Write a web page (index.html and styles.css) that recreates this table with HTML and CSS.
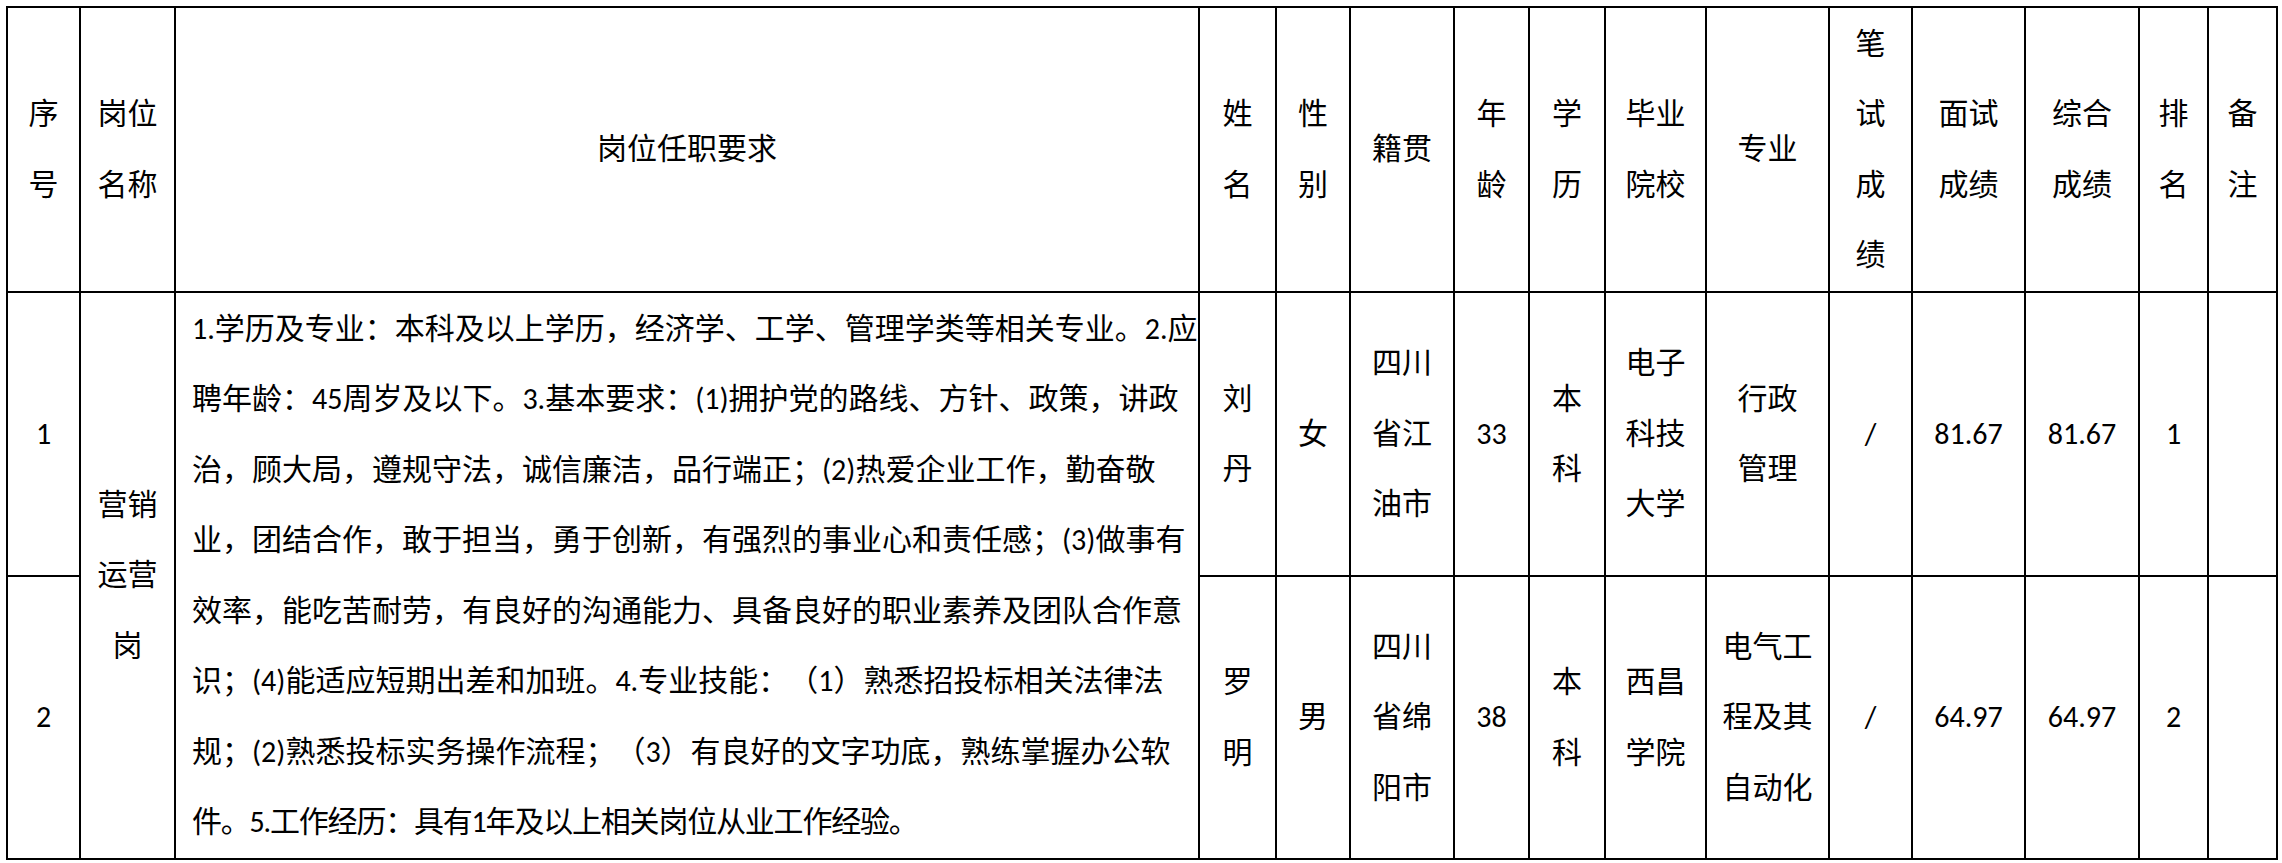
FILE: index.html
```html
<!DOCTYPE html>
<html lang="zh-CN">
<head>
<meta charset="utf-8">
<title>岗位成绩表</title>
<link rel="stylesheet" href="styles.css">
</head>
<body>
<table class="grid">
  <colgroup>
    <col class="c-no"><col class="c-post"><col class="c-req"><col class="c-name"><col class="c-sex">
    <col class="c-home"><col class="c-age"><col class="c-edu"><col class="c-school"><col class="c-major">
    <col class="c-written"><col class="c-interview"><col class="c-total"><col class="c-rank"><col class="c-note">
  </colgroup>
  <thead>
    <tr class="head">
      <th>序<br>号</th>
      <th>岗位<br>名称</th>
      <th>岗位任职要求</th>
      <th>姓<br>名</th>
      <th>性<br>别</th>
      <th>籍贯</th>
      <th>年<br>龄</th>
      <th>学<br>历</th>
      <th>毕业<br>院校</th>
      <th>专业</th>
      <th>笔<br>试<br>成<br>绩</th>
      <th>面试<br>成绩</th>
      <th>综合<br>成绩</th>
      <th>排<br>名</th>
      <th>备<br>注</th>
    </tr>
  </thead>
  <tbody>
    <tr class="row1">
      <td>1</td>
      <td rowspan="2">营销<br>运营<br>岗</td>
      <td rowspan="2" class="req">1.学历及专业：本科及以上学历，经济学、工学、管理学类等相关专业。2.应<br>聘年龄：45周岁及以下。3.基本要求：(1)拥护党的路线、方针、政策，讲政<br>治，顾大局，遵规守法，诚信廉洁，品行端正；(2)热爱企业工作，勤奋敬<br>业，团结合作，敢于担当，勇于创新，有强烈的事业心和责任感；(3)做事有<br>效率，能吃苦耐劳，有良好的沟通能力、具备良好的职业素养及团队合作意<br>识；(4)能适应短期出差和加班。4.专业技能：（1）熟悉招投标相关法律法<br>规；(2)熟悉投标实务操作流程；（3）有良好的文字功底，熟练掌握办公软<br><span class="tail">件。5.工作经历：具有1年及以上相关岗位从业工作经验。</span></td>
      <td>刘<br>丹</td>
      <td>女</td>
      <td>四川<br>省江<br>油市</td>
      <td>33</td>
      <td>本<br>科</td>
      <td>电子<br>科技<br>大学</td>
      <td>行政<br>管理</td>
      <td class="slash">/</td>
      <td>81.67</td>
      <td>81.67</td>
      <td>1</td>
      <td></td>
    </tr>
    <tr class="row2">
      <td>2</td>
      <td>罗<br>明</td>
      <td>男</td>
      <td>四川<br>省绵<br>阳市</td>
      <td>38</td>
      <td>本<br>科</td>
      <td>西昌<br>学院</td>
      <td>电气工<br>程及其<br>自动化</td>
      <td class="slash">/</td>
      <td>64.97</td>
      <td>64.97</td>
      <td>2</td>
      <td></td>
    </tr>
  </tbody>
</table>
</body>
</html>
```

FILE: styles.css
```css
html, body {
  margin: 0;
  padding: 0;
  background: #ffffff;
}

body {
  padding: 6px;
  font-family: Carlito, Lato, "Noto Sans CJK SC", sans-serif;
  font-size: 30px;
  line-height: 70.5px;
  color: #000000;
  text-spacing-trim: space-all;
}

.grid {
  border-collapse: collapse;
  table-layout: fixed;
  width: 2272px;
}

.grid th,
.grid td {
  border: 2px solid #000000;
  padding: 0 4px;
  text-align: center;
  vertical-align: middle;
  font-weight: normal;
  white-space: nowrap;
}

.grid .req {
  text-align: left;
  padding: 0 0 0 16px;
}

.tail {
  letter-spacing: -1.2px;
}

.slash {
  font-weight: 300;
}

.head { height: 285px; }
.row1 { height: 284px; }
.row2 { height: 283px; }

.c-no { width: 73px; }
.c-post { width: 95px; }
.c-req { width: 1024px; }
.c-name { width: 77px; }
.c-sex { width: 74px; }
.c-home { width: 104px; }
.c-age { width: 75px; }
.c-edu { width: 76px; }
.c-school { width: 101px; }
.c-major { width: 123px; }
.c-written { width: 83px; }
.c-interview { width: 113px; }
.c-total { width: 114px; }
.c-rank { width: 69px; }
.c-note { width: 69px; }
```
